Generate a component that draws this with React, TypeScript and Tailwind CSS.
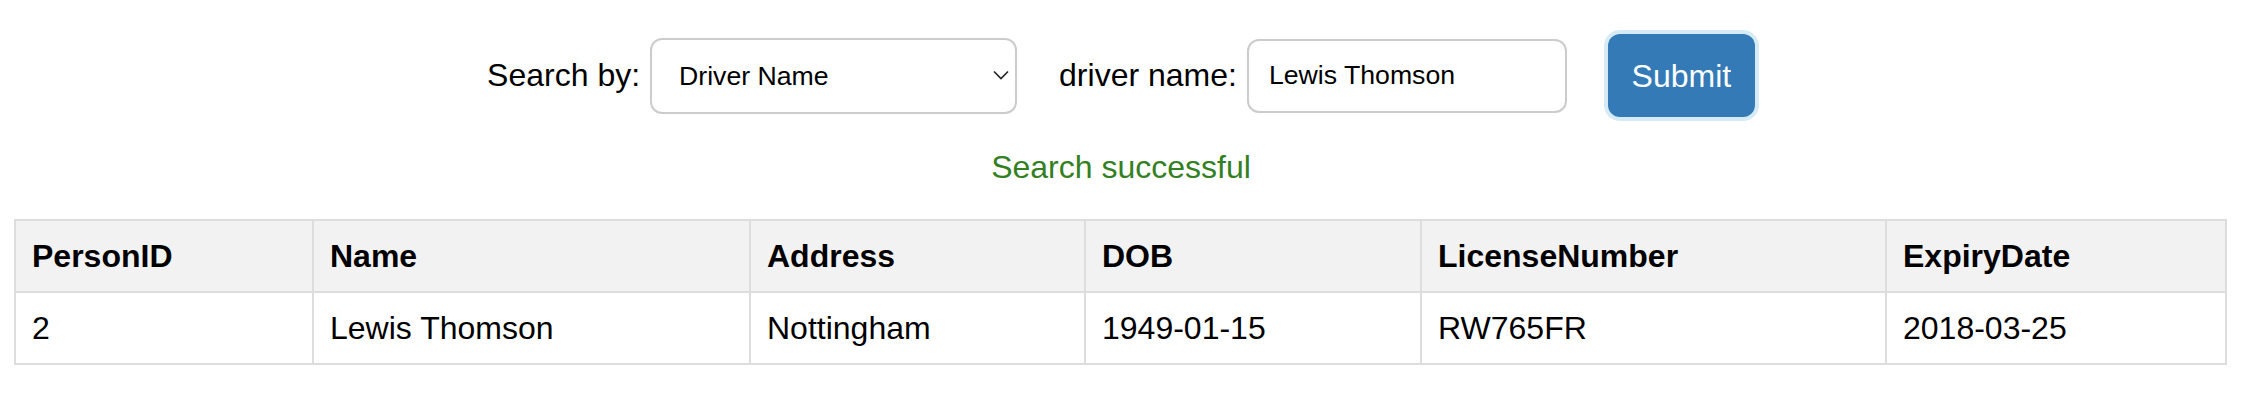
import { useState } from "react";

const rows = [
  {
    id: "2",
    name: "Lewis Thomson",
    address: "Nottingham",
    dob: "1949-01-15",
    license: "RW765FR",
    expiry: "2018-03-25",
  },
];

const headers = ["PersonID", "Name", "Address", "DOB", "LicenseNumber", "ExpiryDate"];

export default function App() {
  const [searchBy, setSearchBy] = useState("name");
  const [value, setValue] = useState("Lewis Thomson");

  return (
    <div className="min-h-[400px] bg-white text-black font-['Liberation_Sans',Arial,sans-serif]">
      <form
        className="flex items-center justify-center pt-[34px]"
        onSubmit={(e) => e.preventDefault()}
      >
        <label htmlFor="search_by" className="text-[32px] leading-[37px]">
          Search by:
        </label>
        <div className="relative ml-[10px]">
          <select
            id="search_by"
            value={searchBy}
            onChange={(e) => setSearchBy(e.target.value)}
            className="h-[76px] w-[367px] appearance-none rounded-[12px] border-2 border-[#cccccc] bg-white pl-[27px] text-[26.67px] text-black outline-none"
          >
            <option value="name">Driver Name</option>
            <option value="license">License Number</option>
          </select>
          <svg
            className="pointer-events-none absolute right-[8px] top-[32px]"
            width="16"
            height="10"
            viewBox="0 0 16 10"
            fill="none"
          >
            <path d="M1 1.5 L8 8.5 L15 1.5" stroke="#222" strokeWidth="1.6" />
          </svg>
        </div>
        <label htmlFor="driver_name" className="ml-[42px] text-[32px] leading-[37px]">
          driver name:
        </label>
        <input
          id="driver_name"
          value={value}
          onChange={(e) => setValue(e.target.value)}
          className="ml-[10px] h-[74px] w-[320px] rounded-[12px] border-2 border-[#cccccc] bg-white pl-[20px] text-[26.67px] text-black outline-none"
        />
        <button
          type="submit"
          className="ml-[41px] h-[83px] w-[147px] rounded-[12px] bg-[#337ab7] text-[32px] text-white shadow-[0_0_0_4px_#d6ebf6]"
        >
          Submit
        </button>
      </form>

      <p className="mt-[32px] text-center text-[32px] leading-[37px] text-[#338023]">
        Search successful
      </p>

      <table className="mt-[33px] ml-[14px] w-[2213px] table-fixed border-collapse text-left text-[32px] leading-[38px]">
        <colgroup>
          <col className="w-[298px]" />
          <col className="w-[437px]" />
          <col className="w-[335px]" />
          <col className="w-[336px]" />
          <col className="w-[465px]" />
          <col />
        </colgroup>
        <thead>
          <tr className="bg-[#f2f2f2]">
            {headers.map((h) => (
              <th key={h} className="border-2 border-[#dddddd] p-[16px] font-bold">
                {h}
              </th>
            ))}
          </tr>
        </thead>
        <tbody>
          {rows.map((r) => (
            <tr key={r.id}>
              <td className="border-2 border-[#dddddd] p-[16px]">{r.id}</td>
              <td className="border-2 border-[#dddddd] p-[16px]">{r.name}</td>
              <td className="border-2 border-[#dddddd] p-[16px]">{r.address}</td>
              <td className="border-2 border-[#dddddd] p-[16px]">{r.dob}</td>
              <td className="border-2 border-[#dddddd] p-[16px]">{r.license}</td>
              <td className="border-2 border-[#dddddd] p-[16px]">{r.expiry}</td>
            </tr>
          ))}
        </tbody>
      </table>
    </div>
  );
}
